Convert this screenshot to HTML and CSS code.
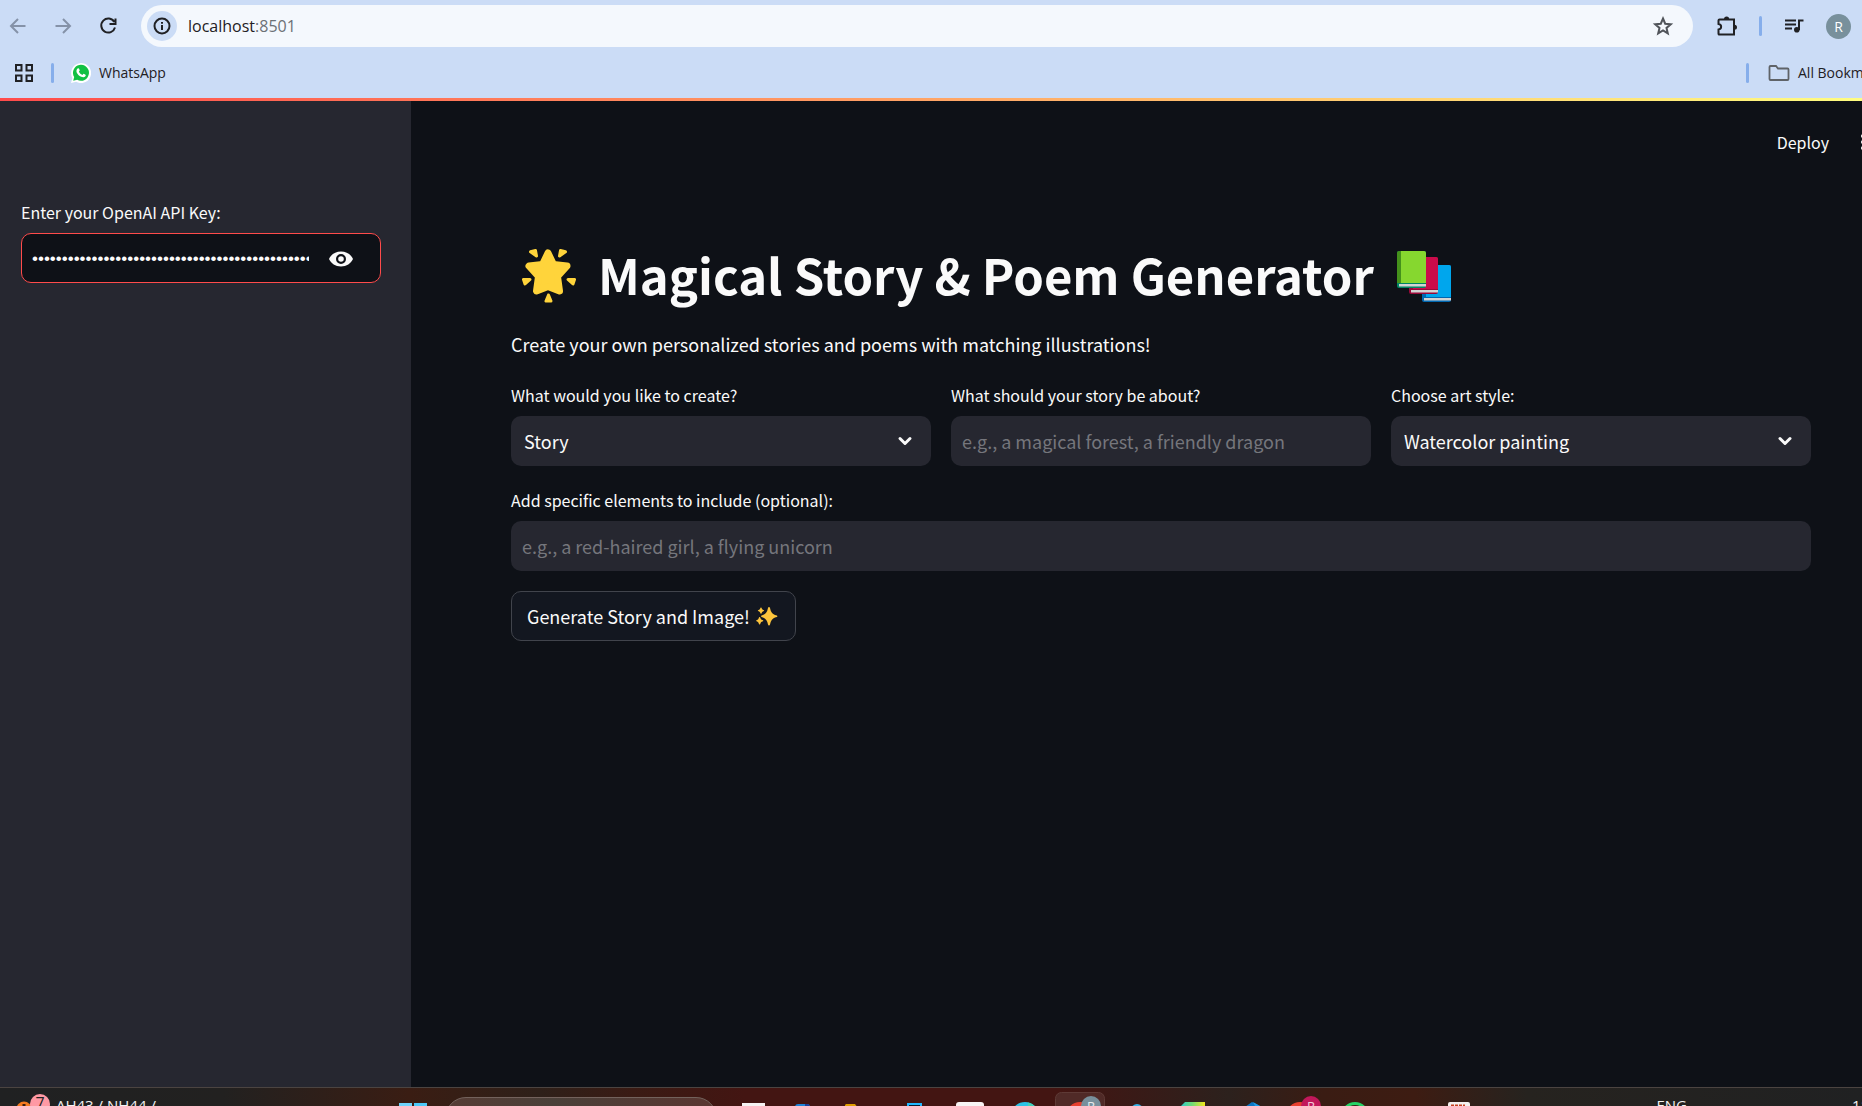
FILE: index.html
```html
<!DOCTYPE html>
<html lang="en">
<head>
<meta charset="utf-8">
<title>Magical Story &amp; Poem Generator</title>
<link rel="stylesheet" href="styles.css">
</head>
<body>
<header class="browser">
  <div class="toolbar">
    <div class="nav">
      <button class="icon-btn muted" aria-label="Back"><svg width="24" height="24" viewBox="0 0 24 24"><path d="M19.500 12H5.500M12 5l-7 7 7 7"/></svg></button>
      <button class="icon-btn muted" aria-label="Forward"><svg width="24" height="24" viewBox="0 0 24 24"><path d="M4.500 12h14M12 5l7 7-7 7"/></svg></button>
      <button class="icon-btn" aria-label="Reload"><svg width="24" height="24" viewBox="0 0 24 24"><path d="M18.300 8A7 7 0 1 0 19 13.500M19.500 4.500v5.500h-6"/></svg></button>
    </div>
    <div class="omnibox">
      <button class="site-info" aria-label="Site information"><svg width="20" height="20" viewBox="0 0 20 20"><circle cx="10" cy="10" r="7.500"/><path d="M10 9v5M10 6v1.800"/></svg></button>
      <div class="url">localhost<span>:8501</span></div>
      <button class="icon-btn star" aria-label="Bookmark this tab"><svg width="24" height="24" viewBox="0 0 24 24"><path d="M12 4.500l2.200 5.200 5.600.5-4.300 3.700 1.300 5.500-4.800-2.900-4.800 2.900 1.300-5.500-4.300-3.700 5.600-.5z"/></svg></button>
    </div>
    <div class="tools">
      <button class="icon-btn" aria-label="Extensions"><svg width="24" height="24" viewBox="0 0 24 24"><path d="M4.500 5.500h14.500v15H4.500c-.8 0-1-.4-1-1v-4c3.500-.6 3.500-5 0-5.500V6.500c0-.6.300-1 1-1z"/><path class="fill" d="M9 5a2.500 2.500 0 0 1 5.200 0zM19.500 10.800a2.500 2.500 0 0 1 0 5z"/></svg></button>
      <span class="divider"></span>
      <button class="icon-btn" aria-label="Media controls"><svg width="24" height="24" viewBox="0 0 24 24"><path d="M3 6.500h11M3 10.500h11M3 14.500h7M17 16V6.500h4.500"/><circle class="fill" cx="14.800" cy="15.800" r="2.800"/></svg></button>
      <button class="avatar" aria-label="Profile">R</button>
    </div>
  </div>
  <nav class="bookmarks">
    <button class="icon-btn apps" aria-label="Apps"><svg width="20" height="20" viewBox="0 0 20 20"><path d="M2 2h5.500v5.500H2zM12.500 2H18v5.500h-5.500zM2 12.500h5.500V18H2zM12.500 12.500H18V18h-5.500z"/></svg></button>
    <span class="divider"></span>
    <a class="bookmark" href="#"><svg width="20" height="20" viewBox="0 0 20 20"><path fill="#fff" d="M0 20l1.400-5A10 10 0 1 1 5.200 18.800z"/><path fill="#12c143" d="M2.200 17.800l1-3.800a8 8 0 1 1 3 2.800z"/><path fill="#fff" d="M6.600 5.500c.6-.6 1.200-.4 1.400.1l.7 1.700c.1.600-.8 1.100-.8 1.500.8 1.500 1.900 2.500 3.400 3.100.5.100.9-1.200 1.400-1.100l1.800.9c.4.200.3 1-.1 1.600-1 1.300-2.600 1.200-4.300.5-2.200-1-3.500-2.500-4.400-4.300-.5-1.500-.2-3 .9-4z"/></svg>WhatsApp</a>
    <div class="all-bookmarks">
      <span class="divider"></span>
      <a class="bookmark" href="#"><svg width="22" height="20" viewBox="0 0 22 20" fill="none" stroke="#5f6368" stroke-width="1.800"><path d="M2.500 3h5.500l2 2.500h9.500c.6 0 1 .4 1 1V16c0 .6-.4 1-1 1h-17c-.6 0-1-.4-1-1V4c0-.6.400-1 1-1z"/></svg>All Bookmarks</a>
    </div>
  </nav>
</header>

<div class="app">
  <aside class="sidebar">
    <div class="field">
      <label for="key">Enter your OpenAI API Key:</label>
      <div class="secret">
        <input id="key" type="password" value="abcdefghijklmnopqrstuvwxyzabcdefghijklmnopqrstuvwxyzabcdefgh">
        <button aria-label="Show password text"><svg width="26" height="26" viewBox="0 0 26 26"><path fill="#fafafa" fill-rule="evenodd" d="M13 5.500C7.500 5.500 3 8.500 1 13c2 4.500 6.500 7.500 12 7.500S23 17.500 25 13C23 8.500 18.500 5.500 13 5.500zM13 18a5 5 0 1 1 0-10 5 5 0 0 1 0 10zm0-2.200a2.800 2.800 0 1 0 0-5.600 2.800 2.800 0 0 0 0 5.600z"/></svg></button>
      </div>
    </div>
  </aside>

  <main class="main">
    <div class="actions">
      <button class="deploy">Deploy</button>
      <button class="kebab" aria-label="Main menu"><svg width="4" height="16" viewBox="0 0 4 16" fill="#fafafa"><circle cx="2" cy="2" r="2"/><circle cx="2" cy="8" r="2"/><circle cx="2" cy="14" r="2"/></svg></button>
    </div>
    <div class="content">
      <h1>
        <svg width="75" height="60" viewBox="0 0 75 60" role="img" aria-label="Glowing star"><g fill="#ffd43b" stroke="#ffd43b" stroke-linejoin="round"><path stroke-width="7" d="M37 7l5.500 11.500L56 20l-9.500 10.500L48.500 45 37 40.500 25.500 45l2-14.500L18 20l13.500-1.500z"/><path stroke-width="3" d="M24.500 4.500l1 5.500-6-4.200zM49.500 4.500l-1 5.500 6-4.200zM12.500 33.500l6.500 0-5 4.500zM63.500 33.500l-6.500 0 5 4.500zM37.500 49l-2.500 6h5z"/></g></svg>
        <span>Magical Story &amp; Poem Generator</span>
        <svg width="75" height="60" viewBox="0 0 75 60" role="img" aria-label="Books"><rect x="36" y="19" width="29" height="37" rx="2" fill="#0067b0"/><path fill="#00a6ed" d="M40 19h23q2 0 2 2v30H40z"/><path fill="#d3d3d3" d="M38 52h27v2.500H38z"/><rect x="23" y="11" width="29" height="37" rx="2" fill="#990838"/><path fill="#ca0b4a" d="M27 11h23q2 0 2 2v30H27z"/><path fill="#d3d3d3" d="M25 44h27v2.500H25z"/><rect x="11" y="5" width="29" height="37" rx="2" fill="#008463"/><path fill="#44911b" d="M13 5h2v32h-4V7q0-2 2-2z"/><path fill="#86d72f" d="M15 5h23q2 0 2 2v30H15z"/><path fill="#d3d3d3" d="M13 38h27v2.500H13z"/></svg>
      </h1>
      <p class="lead">Create your own personalized stories and poems with matching illustrations!</p>
      <form class="form">
        <div class="field">
          <label for="kind">What would you like to create?</label>
          <div class="select">
            <select id="kind"><option>Story</option><option>Poem</option></select>
            <svg width="16" height="16" viewBox="0 0 16 16"><path d="M3 5.500l5 5 5-5"/></svg>
          </div>
        </div>
        <div class="field">
          <label for="topic">What should your story be about?</label>
          <input id="topic" type="text" placeholder="e.g., a magical forest, a friendly dragon">
        </div>
        <div class="field">
          <label for="style">Choose art style:</label>
          <div class="select">
            <select id="style"><option>Watercolor painting</option></select>
            <svg width="16" height="16" viewBox="0 0 16 16"><path d="M3 5.500l5 5 5-5"/></svg>
          </div>
        </div>
        <div class="field wide">
          <label for="extra">Add specific elements to include (optional):</label>
          <input id="extra" type="text" placeholder="e.g., a red-haired girl, a flying unicorn">
        </div>
        <button class="generate" type="button">Generate Story and Image!
          <svg width="28" height="24" viewBox="0 0 28 24" fill="#fcc43c" aria-hidden="true"><path d="M16 3q.8 0 1 1 1 5.500 5 7 2.500.5 2.500 1.200T22 13.500q-4 1.500-5 7-.2 1-1 1t-1-1q-1-5.500-5-7-2-.6-2-1.300T10 11q4-1.500 5-7 .2-1 1-1zM8 3.500q.6 0 .9 1.200.3 1 1.500 1.300.8.300.8.600t-.8.600q-1.200.3-1.500 1.300Q8.600 9.700 8 9.700T7.100 8.500Q6.800 7.500 5.600 7.200q-.8-.3-.8-.6t.8-.6q1.200-.3 1.500-1.300Q7.400 3.500 8 3.500zM6.600 13q.6 0 1 1.400.4 1.200 1.700 1.500 1 .3 1 .8t-1 .7q-1.300.4-1.700 1.600-.4 1.500-1 1.500t-1-1.500q-.4-1.200-1.600-1.600-1-.3-1-.7t1-.8q1.200-.3 1.600-1.500.4-1.400 1-1.400z"/></svg>
        </button>
      </form>
    </div>
  </main>
</div>

<footer class="taskbar">
  <div class="widget">
    <svg width="36" height="40" viewBox="0 0 36 40"><circle cx="9" cy="21" r="7.500" fill="#f47a20"/><path d="M9 16v9" stroke="#3a1c10" stroke-width="3"/><circle cx="25" cy="16" r="10" fill="#ff99a4"/><text x="25" y="21" text-anchor="middle" font-size="16" fill="#222">7</text></svg>
    <span>AH43 / NH44 /</span>
  </div>
  <div class="pinned">
    <svg class="slot" viewBox="0 0 50 60"><path fill="#6fd3fb" d="M12 15h13v13H12z"/><path fill="#4cc9f8" d="M27 15h13v13H27zM12 30h13v13H12zM27 30h13v13H27z"/></svg>
    <div class="search"></div>
    <svg class="slot" viewBox="0 0 50 60"><path fill="#f5f2f2" d="M17 15h23v24H17z"/></svg>
    <svg class="slot" viewBox="0 0 50 60"><rect x="15" y="16" width="15" height="24" rx="3" fill="#1c84d8"/><path fill="#1a3d98" d="M25 16h2q3 0 3 3v20h-5z"/></svg>
    <svg class="slot" viewBox="0 0 50 60"><path fill="#e09e00" d="M11 16h9l3 4h17v20H10V17z"/></svg>
    <svg class="slot" viewBox="0 0 50 60"><path fill="#0b1d30" stroke="#20b8ff" stroke-width="2" d="M18 16h13v24H18z"/></svg>
    <svg class="slot" viewBox="0 0 50 60"><rect x="11" y="14" width="28" height="28" rx="3" fill="#f8f4f4"/></svg>
    <svg class="slot" viewBox="0 0 50 60"><circle cx="25" cy="28" r="14" fill="#2cc3e6"/><path fill="#42d3b5" d="M28 14.500a14 14 0 0 1 11 13H28z"/></svg>
    <svg class="slot" viewBox="0 0 50 60"><rect x=".5" y="4.500" width="49" height="49" rx="6" fill="#502a27" stroke="#5e3a36"/><circle cx="25" cy="28" r="14" fill="#e8402f"/><circle cx="36" cy="18" r="10" fill="#78909c"/><text x="36" y="23" text-anchor="middle" font-size="13" fill="#e6eaec">R</text></svg>
    <svg class="slot" viewBox="0 0 50 60"><circle cx="27" cy="22" r="6" fill="#35b1e6"/></svg>
    <svg class="slot" viewBox="0 0 50 60"><defs><linearGradient id="pc"><stop offset="0" stop-color="#21c8d8"/><stop offset=".5" stop-color="#6fd977"/><stop offset="1" stop-color="#f2e61b"/></linearGradient></defs><path fill="url(#pc)" d="M20 14h20v26H14V20z"/></svg>
    <svg class="slot" viewBox="0 0 50 60"><path fill="#0a76c4" d="M32 14l8 4v22l-8 3-20-15z"/><path fill="#1e9be8" d="M33 14l7 4v10z"/></svg>
    <svg class="slot" viewBox="0 0 50 60"><circle cx="25" cy="28" r="14" fill="#e8402f"/><circle cx="36" cy="18" r="10" fill="#c2185b"/><text x="36" y="23" text-anchor="middle" font-size="13" fill="#f3c9da">R</text></svg>
    <svg class="slot" viewBox="0 0 50 60"><circle cx="25" cy="28" r="12.500" fill="none" stroke="#25d366" stroke-width="3"/></svg>
  </div>
  <div class="tray">
    <svg width="22" height="40" viewBox="0 0 22 40"><rect y="14" width="22" height="22" rx="2" fill="#f4f0ee"/><path d="M3 17.500h14" stroke="#c8401f" stroke-width="2" stroke-dasharray="3 1"/></svg>
    <span>ENG</span>
    <span class="clock">11:42</span>
  </div>
</footer>
</body>
</html>
```
FILE: styles.css
```css
* { box-sizing: border-box; }

body {
  margin: 0;
  height: 100vh;
  display: flex;
  flex-direction: column;
  overflow: hidden;
  background: #0e1117;
  color: #fafafa;
  font-family: "Noto Sans CJK SC", "Noto Sans", sans-serif;
  font-size: 18px;
}

button, input, select { font: inherit; color: inherit; }
button { padding: 0; border: 0; background: none; }
svg { display: block; flex: none; }

/* Browser chrome */
.browser {
  flex: none;
  height: 98px;
  padding-top: 5px;
  background: #cbdcf6;
  color: #1f2024;
  font-family: "Open Sans", "Noto Sans", sans-serif;
}
.toolbar { display: flex; align-items: center; }
.nav { display: flex; gap: 21px; padding-left: 6px; width: 141px; }
.icon-btn { flex: none; }
.icon-btn svg { fill: none; stroke: #202124; stroke-width: 2; }
.icon-btn .fill { fill: #202124; stroke: none; }
.muted svg { stroke: #8592a8; }
.omnibox {
  flex: 1;
  display: flex;
  align-items: center;
  height: 42px;
  padding: 0 18px 0 6px;
  border-radius: 21px;
  background: #f4f8fd;
}
.site-info {
  display: grid;
  place-items: center;
  width: 30px;
  height: 30px;
  border-radius: 50%;
  background: #cbdcf6;
}
.site-info svg { fill: none; stroke: #202124; stroke-width: 2; }
.url { flex: 1; margin-left: 11px; font-size: 16px; }
.url span { color: #6c7176; }
.star svg { stroke: #50545a; }
.tools { display: flex; align-items: center; gap: 20px; padding: 0 11px 0 22px; }
.divider { flex: none; width: 3px; height: 20px; border-radius: 2px; background: #86aeeb; }
.avatar {
  width: 25px;
  height: 25px;
  border-radius: 50%;
  background: #78909c;
  color: #fff;
  font-size: 14px;
}
.bookmarks { display: flex; align-items: center; gap: 17px; height: 51px; padding-left: 14px; font-size: 14px; }
.bookmark { display: flex; align-items: center; gap: 8px; color: inherit; text-decoration: none; white-space: nowrap; }
.all-bookmarks { display: flex; align-items: center; gap: 19px; width: 116px; margin-left: auto; overflow: hidden; }

/* App */
.app {
  flex: 1;
  min-height: 0;
  display: flex;
  border-top: 3px solid;
  border-image: linear-gradient(90deg, #ff4b4b, #fffd80) 1;
}
.sidebar { flex: none; width: 411px; padding: 97px 30px 0 21px; background: #262730; }
.main { flex: 1; }
.actions {
  display: flex;
  justify-content: flex-end;
  align-items: center;
  gap: 32px;
  height: 82px;
  overflow: hidden;
}
.kebab { margin-right: -3px; }
.deploy { font-size: 16px; }
.content { padding: 52px 51px 0 100px; }
h1 {
  display: flex;
  align-items: center;
  gap: 12px;
  margin: 0;
  font-size: 49px;
  line-height: 78px;
  white-space: nowrap;
}
h1 svg { margin-top: 4px; }
.lead { margin: 15px 0 0; line-height: 32px; }
.form {
  display: grid;
  grid-template-columns: repeat(3, minmax(0, 1fr));
  gap: 20px;
  margin-top: 21px;
}
.wide { grid-column: 1 / -1; }
.field { display: flex; flex-direction: column; gap: 7px; }
.field label { font-size: 16px; line-height: 28px; }
.field input, .select, .secret {
  width: 100%;
  height: 50px;
  border: 0;
  border-radius: 10px;
  background: #262730;
}
.field input { padding: 0 11px; outline: 0; }
.field input::placeholder { color: #75767c; opacity: 1; }
.select { display: grid; align-items: center; }
.select select {
  grid-area: 1 / 1;
  width: 100%;
  height: 50px;
  padding: 0 40px 0 13px;
  border: 0;
  background: none;
  appearance: none;
}
.select svg {
  grid-area: 1 / 1;
  justify-self: end;
  margin-right: 18px;
  fill: none;
  stroke: #fafafa;
  stroke-width: 3;
  stroke-linecap: round;
  stroke-linejoin: round;
  pointer-events: none;
}
.field .secret {
  display: flex;
  align-items: center;
  padding: 2px 26px 0 10px;
  border: 1px solid #ff4b4b;
  background: #0e1117;
}
.field .secret input {
  flex: 1;
  min-width: 0;
  height: 46px;
  padding: 0;
  margin-right: 19px;
  border-radius: 0;
  background: none;
  font-family: "Liberation Sans", sans-serif;
  font-size: 17px;
}
.generate {
  display: flex;
  align-items: center;
  justify-self: start;
  gap: 3px;
  height: 50px;
  padding: 0 14px 0 15px;
  border: 1px solid #41444c;
  border-radius: 10px;
  background: #131720;
  white-space: nowrap;
}

/* Taskbar, running off the bottom edge */
.taskbar {
  flex: none;
  display: flex;
  height: 19px;
  overflow: hidden;
  border-top: 1px solid #4b4441;
  background: linear-gradient(90deg, #202122 0, #222120 12%, #3a1d13 22%, #2e2019 29%, #3a1b14 34%, #431512 40%, #431512 57%, #2c211d 66%, #3a1c13 71%, #3d1c12 76%, #26231f 82%, #202122);
  color: #f3f3f3;
  font-family: "Open Sans", "Noto Sans", sans-serif;
  font-size: 15px;
}
.widget { flex: none; display: flex; gap: 5px; width: 387px; padding-left: 15px; }
.widget span, .tray span { padding-top: 7px; white-space: nowrap; line-height: 20px; }
.pinned { flex: none; display: flex; gap: 5px; }
.slot { width: 50px; height: 60px; }
.search {
  width: 272px;
  height: 42px;
  margin: 9px 3px 0;
  border: 1px solid #73625c;
  border-radius: 21px;
  background: linear-gradient(90deg, #563c35, #4a4039 40%, #5a3631);
}
.tray { flex: 1; display: flex; justify-content: flex-end; }
.tray svg { margin-right: 186px; }
.clock { width: 10px; margin-left: 165px; overflow: hidden; }
```
